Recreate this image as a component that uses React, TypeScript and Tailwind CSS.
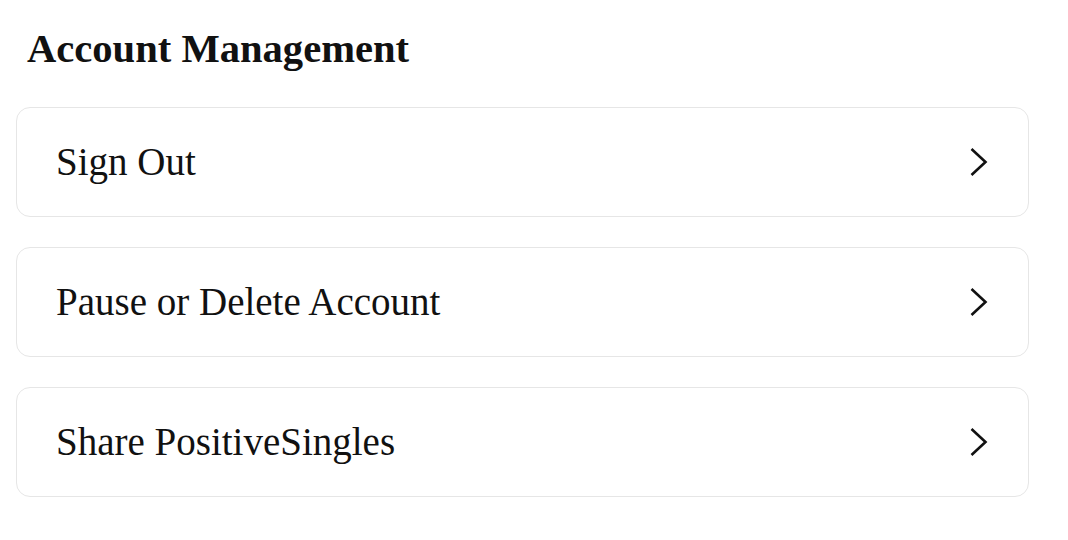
import React from 'react';

const items = ['Sign Out', 'Pause or Delete Account', 'Share PositiveSingles'];

const Chevron: React.FC = () => (
  <svg width="20" height="32" viewBox="0 0 20 32" fill="none" className="shrink-0">
    <path d="M2.5 3 L16.5 16 L2.5 29" stroke="#111111" strokeWidth="2.6" strokeLinecap="butt" strokeLinejoin="miter" />
  </svg>
);

const App: React.FC = () => {
  return (
    <div className="min-h-screen w-[1068px] bg-white pt-[25px] pl-[16px] pr-[39px] font-['Liberation_Serif',serif] text-[#111111]">
      <h2 className="pl-[11px] text-[40.6px] leading-[48px] font-bold">Account Management</h2>
      <div className="mt-[34px] flex flex-col gap-[30px]">
        {items.map((label) => (
          <button
            key={label}
            className="flex h-[110px] w-full items-center justify-between rounded-[14px] border border-[#e6e6e6] bg-white px-[39px] text-left"
          >
            <span className="text-[39px] leading-[48px]">{label}</span>
            <Chevron />
          </button>
        ))}
      </div>
    </div>
  );
};

export default App;
